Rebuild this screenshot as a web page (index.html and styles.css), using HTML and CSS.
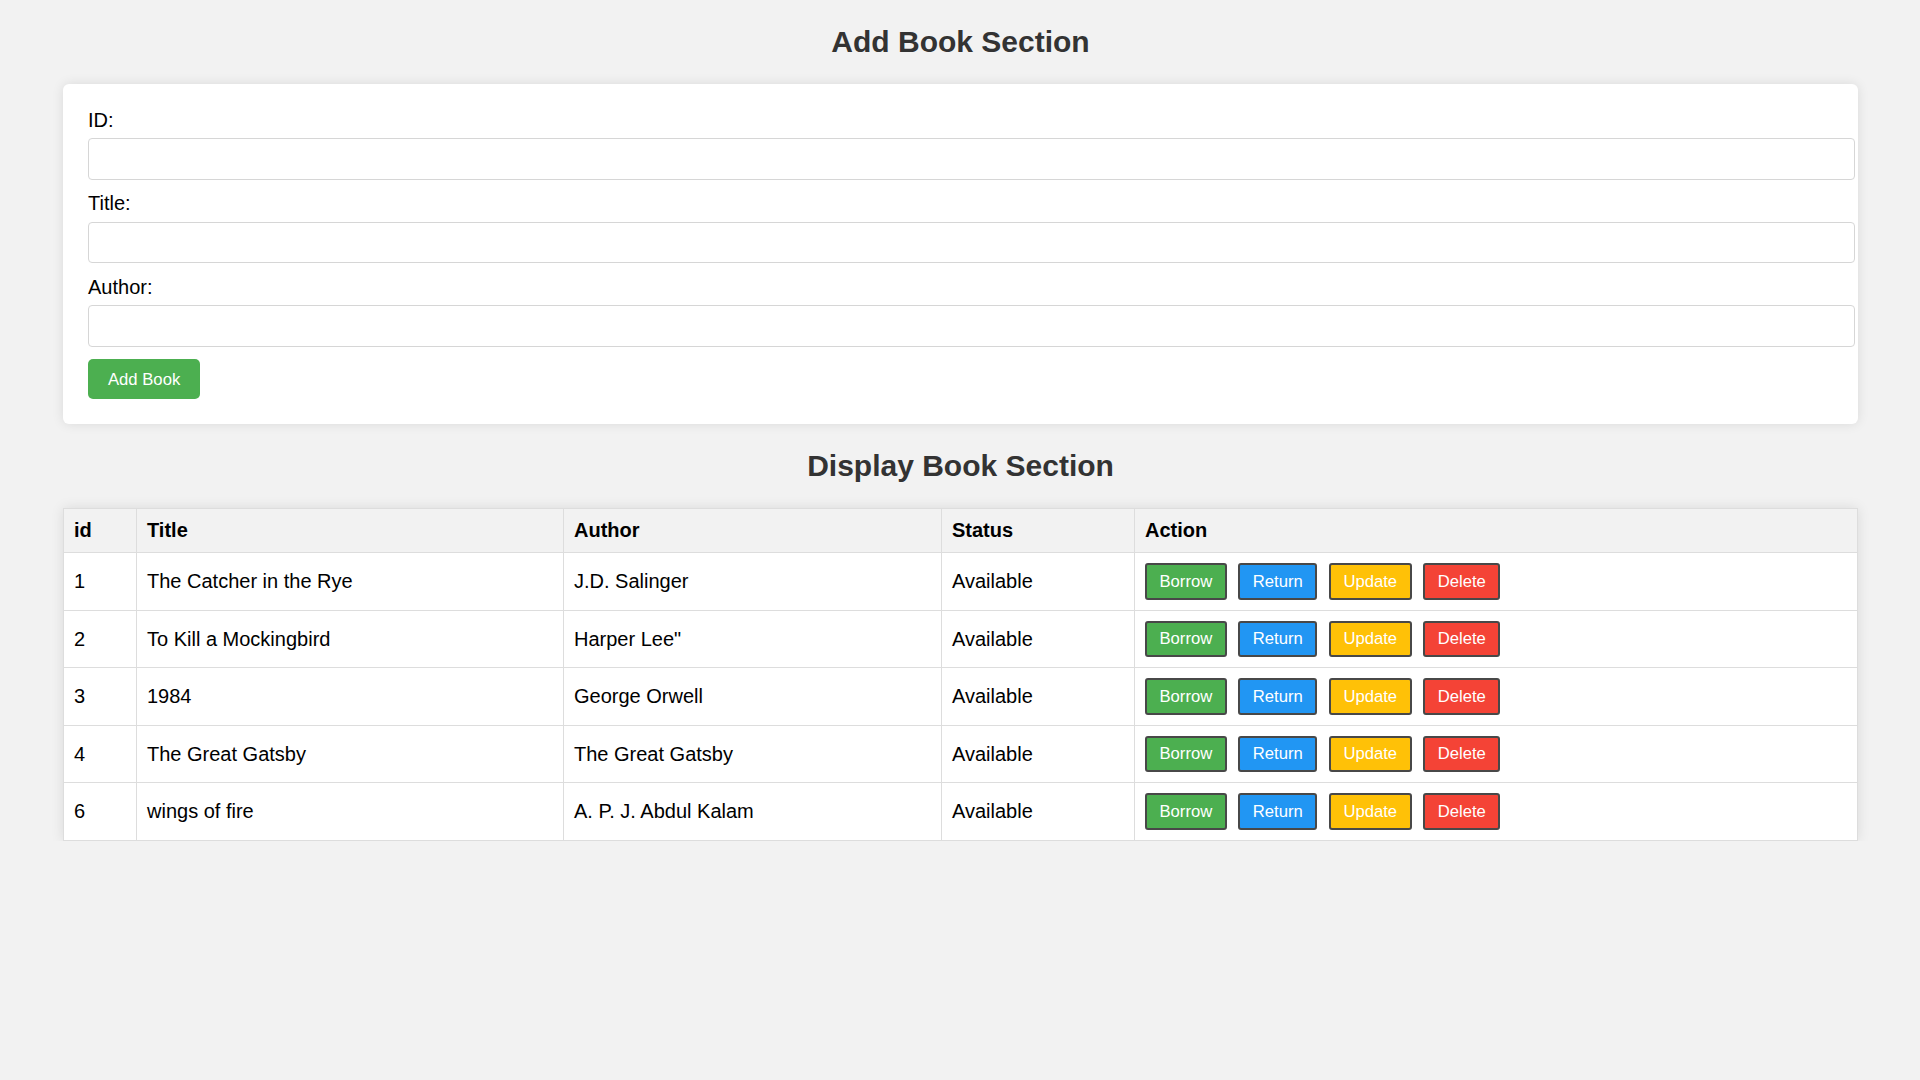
FILE: index.html
```
<!DOCTYPE html>
<html lang="en">
<head>
<meta charset="utf-8">
<title>Library</title>
<link rel="stylesheet" href="styles.css">
</head>
<body>
<h2 class="section-title">Add Book Section</h2>
<form class="card">
  <label class="field-label" for="id">ID:</label>
  <input class="field-input" type="text" id="id">
  <label class="field-label" for="title">Title:</label>
  <input class="field-input" type="text" id="title">
  <label class="field-label" for="author">Author:</label>
  <input class="field-input" type="text" id="author">
  <button type="button" class="add-btn">Add Book</button>
</form>

<h2 class="section-title">Display Book Section</h2>
<table class="books">
  <colgroup>
    <col class="c-id">
    <col class="c-title">
    <col class="c-author">
    <col class="c-status">
    <col class="c-action">
  </colgroup>
  <thead>
    <tr><th>id</th><th>Title</th><th>Author</th><th>Status</th><th>Action</th></tr>
  </thead>
  <tbody>
    <tr>
      <td>1</td><td>The Catcher in the Rye</td><td>J.D. Salinger</td><td>Available</td>
      <td><button class="act borrow">Borrow</button> <button class="act return">Return</button> <button class="act update">Update</button> <button class="act delete">Delete</button></td>
    </tr>
    <tr>
      <td>2</td><td>To Kill a Mockingbird</td><td>Harper Lee"</td><td>Available</td>
      <td><button class="act borrow">Borrow</button> <button class="act return">Return</button> <button class="act update">Update</button> <button class="act delete">Delete</button></td>
    </tr>
    <tr>
      <td>3</td><td>1984</td><td>George Orwell</td><td>Available</td>
      <td><button class="act borrow">Borrow</button> <button class="act return">Return</button> <button class="act update">Update</button> <button class="act delete">Delete</button></td>
    </tr>
    <tr>
      <td>4</td><td>The Great Gatsby</td><td>The Great Gatsby</td><td>Available</td>
      <td><button class="act borrow">Borrow</button> <button class="act return">Return</button> <button class="act update">Update</button> <button class="act delete">Delete</button></td>
    </tr>
    <tr>
      <td>6</td><td>wings of fire</td><td>A. P. J. Abdul Kalam</td><td>Available</td>
      <td><button class="act borrow">Borrow</button> <button class="act return">Return</button> <button class="act update">Update</button> <button class="act delete">Delete</button></td>
    </tr>
  </tbody>
</table>
</body>
</html>
```

FILE: styles.css
```
html {
  background: #f2f2f2;
}
body {
  margin: 0;
  padding: 0 62px 0 63px;
  font-family: "Liberation Sans", Arial, sans-serif;
  font-size: 20px;
  color: #000;
  background: #f2f2f2;
}
.section-title {
  font-size: 30px;
  font-weight: bold;
  color: #333;
  text-align: center;
  margin: 25px 0;
}
.card {
  background: #fff;
  padding: 25px;
  border-radius: 6px;
  box-shadow: 0 0 12px rgba(0, 0, 0, 0.1);
  margin: 0;
}
.field-label {
  display: block;
  font-size: 20px;
  line-height: 23px;
}
.field-input {
  display: block;
  width: 100%;
  box-sizing: content-box;
  padding: 10px;
  border: 1px solid #d6d6d6;
  border-radius: 4px;
  font-family: "Liberation Sans", Arial, sans-serif;
  font-size: 16.67px;
  line-height: 19.5px;
  margin: 6.2px 0 12.8px;
  background: #fff;
}
.add-btn {
  display: block;
  background: #4caf50;
  color: #fff;
  border: none;
  border-radius: 5px;
  padding: 10.5px 20px;
  font-family: "Liberation Sans", Arial, sans-serif;
  font-size: 16.67px;
  line-height: 19px;
}
.books {
  width: 100%;
  border-collapse: collapse;
  table-layout: fixed;
  background: #fff;
  box-shadow: 0 0 12px rgba(0, 0, 0, 0.1);
}
.c-id { width: 73px; }
.c-title { width: 427px; }
.c-author { width: 378px; }
.c-status { width: 193px; }
.books th,
.books td {
  border: 1px solid #ddd;
  padding: 10px;
  text-align: left;
  font-size: 20px;
  line-height: 23px;
}
.books th {
  background: #f2f2f2;
  font-weight: bold;
}
.act {
  font-family: "Liberation Sans", Arial, sans-serif;
  font-size: 16.67px;
  line-height: 19.5px;
  color: #fff;
  padding: 6.5px 12.5px;
  border: 2px solid #484848;
  border-radius: 3px;
  margin: 0 6px 0 0;
}
.borrow { background: #4caf50; }
.return { background: #2196f3; }
.update { background: #ffc107; }
.delete { background: #f44336; }
```
